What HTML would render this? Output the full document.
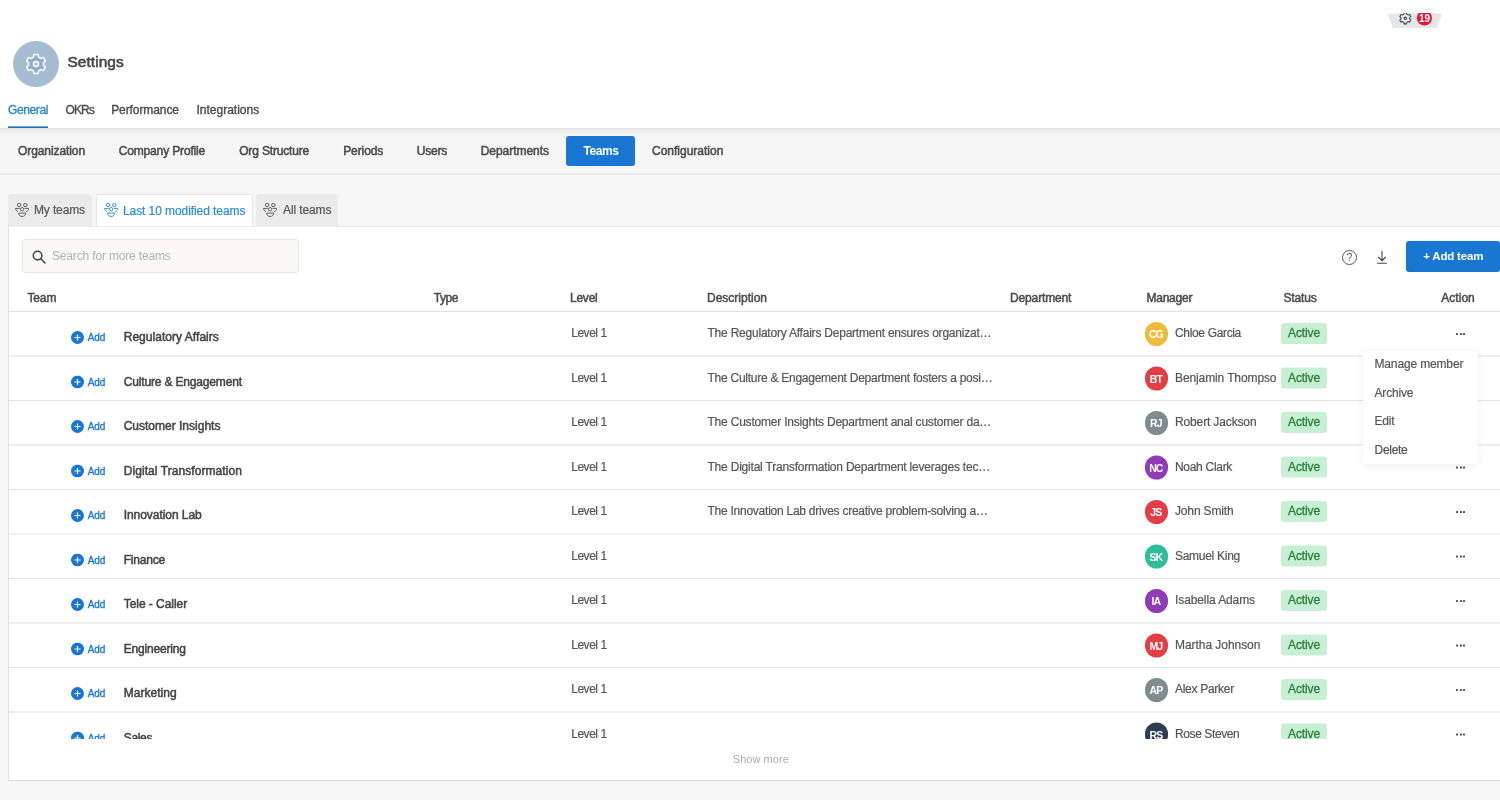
<!DOCTYPE html>
<html lang="en">
<head>
<meta charset="utf-8">
<title>Settings - Teams</title>
<style>
*{box-sizing:border-box;margin:0;padding:0}
html,body{width:1500px;height:800px;overflow:hidden}
body{position:relative;background:#f6f6f6;font-family:"Liberation Sans",Arial,sans-serif;font-size:12px;color:#4a4a4a;line-height:14px}
.wrap{position:absolute;left:0;top:0;width:1500px;height:800px;overflow:hidden;will-change:transform}
.abs,.t{position:absolute;white-space:nowrap}
.t{line-height:14px}
.m{-webkit-text-stroke:.5px currentColor}
.topbar{position:absolute;left:0;top:0;width:1500px;height:128px;background:#fff}
.widget{position:absolute;left:1386px;top:13px;width:58px;height:16px;overflow:hidden}
.logo{position:absolute;left:13px;top:40.5px;width:46px;height:46px;border-radius:50%;background:#a4bdd3}
.logo svg{position:absolute;left:12px;top:12px}
.title{left:67.5px;top:52px;font-size:15.5px;line-height:20px;color:#444;-webkit-text-stroke:.55px currentColor}
.tab{top:102.5px;font-size:12px;color:#4a4a4a;-webkit-text-stroke:.35px currentColor}
.tab.on{color:#2b87d3}
.ul{position:absolute;left:8px;top:126px;width:40px;height:2px;background:linear-gradient(#62aeec 0,#62aeec 1px,#2a6eae 1px)}
.subnav{position:absolute;left:0;top:128px;width:1500px;height:47px;background:linear-gradient(#e1e1e1 0,#ececec 2px,#f2f2f2 5px,#f5f5f5 8px);border-bottom:2px solid #ebebeb}
.sn{top:143.5px;color:#4a4a4a}
.snbtn{position:absolute;left:566px;top:136px;width:69px;height:30px;border-radius:3px;background:#1976d2}
.snbtn span{position:absolute;left:17.4px;top:7.5px;color:#fff;font-weight:bold;white-space:nowrap}
.tt{position:absolute;top:194px;height:32px;background:#ebebeb;color:#555;border-radius:3px 3px 0 0}
.tt.on{background:#fff;border:1px solid #e6e6e6;border-bottom:0;height:33px;color:#2b8ad6}
.tt.on svg{left:6.8px;top:8.4px}
.tt svg{position:absolute;left:6.8px;top:8.6px}
.tt span{position:absolute;top:8.5px;white-space:nowrap}
.panel{position:absolute;left:8px;top:226px;width:1492px;height:555px;background:#fff;border-left:1px solid #e2e2e2;border-top:1px solid #ececec;border-bottom:1px solid #dcdcdc}
.search{position:absolute;left:22px;top:239px;width:277px;height:34px;background:#faf9f8;border:1px solid #e8e8e8;border-radius:3px}
.search svg{position:absolute;left:9px;top:10px}
.search span{position:absolute;left:29px;top:9px;color:#b0b0b0;white-space:nowrap}
.addbtn{position:absolute;left:1406px;top:241px;width:93.6px;height:31px;border-radius:3px;background:#1976d2}
.addbtn span{position:absolute;left:17.2px;top:8px;color:#fff;font-weight:bold;white-space:nowrap;font-size:11.5px}
.th{top:291px;color:#4c4c4c}
.hline{position:absolute;left:9px;top:311px;width:1491px;height:1px;background:#e0e0e0}
.rows{position:absolute;left:9px;top:312px;width:1491px;height:427px;overflow:hidden}
.row{position:absolute;left:0;width:1491px;height:44.5px}
.ln{position:absolute;left:0;width:1491px;height:1px;background:#e2e2e2}
.ln.h{height:2px;background:#f0f0f0}
.row span{position:absolute;white-space:nowrap;line-height:14px}
.plus{left:62px;top:18.5px;width:13px;height:13px}
.plus svg{display:block}
.add{left:78.8px;top:18.5px;font-size:10px;color:#1976d2;-webkit-text-stroke:.3px currentColor}
.tname{left:114.7px;top:17.5px;color:#444;-webkit-text-stroke:.5px currentColor}
.lvl{left:562.2px;top:14px;color:#555}
.desc{left:698.5px;top:14px;color:#555}
.av{left:1135.5px;top:10px;width:23.6px;height:23.6px;border-radius:50%;color:#fff;font-size:10.5px;font-weight:bold;text-align:center;line-height:24px!important;letter-spacing:-.9px;text-indent:-.9px}
.mgr{left:1166px;top:14px;color:#555;width:102px;overflow:hidden}
.badge{left:1272px;top:11px;width:46px;height:20.5px;border-radius:3px;background:#c6efd3;color:#2a7d3c;text-align:center;line-height:20px!important;-webkit-text-stroke:.3px currentColor}
.dots{left:1447px;top:20.5px;width:9px;height:3px}
.dots i{position:absolute;top:0;width:2px;height:2px;background:#505050;border-radius:.5px}
.dots i:nth-child(1){left:0}.dots i:nth-child(2){left:3.5px}.dots i:nth-child(3){left:7px}
.showmore{left:732.8px;top:751.6px;color:#ababab;font-size:11px}
.menu{position:absolute;left:1362.5px;top:351px;width:115px;height:113px;background:#fff;border-radius:3px;box-shadow:0 1px 9px rgba(0,0,0,.075)}
.menu span{position:absolute;left:12px;color:#555;white-space:nowrap;line-height:14px}
.n19{position:absolute;left:31.4px;top:0px;width:14px;text-align:center;font-size:10px;line-height:12px;color:#fff;font-weight:bold;letter-spacing:-.2px}
.lvl,.desc,.mgr,.menu span,.tt span{-webkit-text-stroke:.2px currentColor}
</style>
</head>
<body>
<div class="wrap">
<div class="topbar"></div>
<div class="widget"><svg width="58" height="16" viewBox="0 0 58 16">
<polygon points="1.7,0.6 56,0.6 51,15 7,15" fill="#e4e6e8"/>
<g transform="translate(19.3,5.3) scale(.9)" fill="none" stroke="#444" stroke-width="1.15"><path d="M-1.2-6.2h2.4l.5 1.7 1.5.8 1.7-.5 1.2 2.1-1.2 1.3v1.6l1.2 1.3-1.2 2.1-1.7-.5-1.5.8-.5 1.7h-2.4l-.5-1.7-1.5-.8-1.7.5-1.2-2.1 1.2-1.3v-1.6l-1.2-1.3 1.2-2.1 1.7.5 1.5-.8z"/><circle cx="0" cy="0" r="1.3"/></g>
<circle cx="38.4" cy="5" r="7.6" fill="#e8143c"/>
</svg><b class="n19">19</b></div>
<div class="logo"><svg width="22" height="22" viewBox="-11 -11 22 22" fill="#93adc7" stroke="#fff" stroke-width="1.5" stroke-linejoin="round"><path d="M-1.9-9.6h3.8l.7 2.7 2.2 1.3 2.7-.8 1.9 3.3-2 1.9v2.4l2 1.9-1.9 3.3-2.7-.8-2.2 1.3-.7 2.7h-3.8l-.7-2.7-2.2-1.3-2.7.8-1.9-3.3 2-1.9v-2.4l-2-1.9 1.9-3.3 2.7.8 2.2-1.3z"/><circle cx="0" cy="0" r="2.5" fill="#a4bdd3"/></svg></div>
<div class="t title m" style="letter-spacing:0.03px">Settings</div>
<div class="t tab on" style="left:8px;letter-spacing:-0.39px">General</div>
<div class="t tab" style="left:65.5px;letter-spacing:-0.94px">OKRs</div>
<div class="t tab" style="left:111.2px;letter-spacing:-0.09px">Performance</div>
<div class="t tab" style="left:196.5px">Integrations</div>
<div class="ul"></div>
<div class="subnav"></div>
<div class="t sn m" style="left:18px;letter-spacing:-0.09px">Organization</div>
<div class="t sn m" style="left:118.7px;letter-spacing:-0.15px">Company Profile</div>
<div class="t sn m" style="left:239.2px;letter-spacing:-0.16px">Org Structure</div>
<div class="t sn m" style="left:343.2px;letter-spacing:-0.10px">Periods</div>
<div class="t sn m" style="left:416.8px;letter-spacing:-0.23px">Users</div>
<div class="t sn m" style="left:480.7px;letter-spacing:-0.04px">Departments</div>
<div class="snbtn"><span class="" style="letter-spacing:-0.43px">Teams</span></div>
<div class="t sn m" style="left:652px">Configuration</div>
<div class="tt" style="left:8px;width:84px"><svg width="14.4" height="14.4" viewBox="0 0 14.4 14.4" fill="none" stroke="#555" stroke-width=".95"><circle cx="4.1" cy="2" r="1.7"/><circle cx="10.3" cy="2" r="1.7"/><circle cx="7.2" cy="6.2" r="1.7"/><path d="M4.6 5.4H.6c0 1.5.9 2.7 2.4 3.1M9.8 5.4h4c0 1.5-.9 2.700000000000001-2.4 3.1M3.6 10.1h7.2c0 1.9-1.6 3.4-3.6 3.4s-3.6-1.5-3.6-3.4z"/></svg><span class="" style="left:26px;letter-spacing:-0.14px">My teams</span></div>
<div class="tt on" style="left:96px;width:157px"><svg width="14.4" height="14.4" viewBox="0 0 14.4 14.4" fill="none" stroke="#2b8ad6" stroke-width=".95"><circle cx="4.1" cy="2" r="1.7"/><circle cx="10.3" cy="2" r="1.7"/><circle cx="7.2" cy="6.2" r="1.7"/><path d="M4.6 5.4H.6c0 1.5.9 2.7 2.4 3.1M9.8 5.4h4c0 1.5-.9 2.700000000000001-2.4 3.1M3.6 10.1h7.2c0 1.9-1.6 3.4-3.6 3.4s-3.6-1.5-3.6-3.4z"/></svg><span class="" style="left:26px;letter-spacing:-0.08px">Last 10 modified teams</span></div>
<div class="tt" style="left:256px;width:81.5px"><svg width="14.4" height="14.4" viewBox="0 0 14.4 14.4" fill="none" stroke="#555" stroke-width=".95"><circle cx="4.1" cy="2" r="1.7"/><circle cx="10.3" cy="2" r="1.7"/><circle cx="7.2" cy="6.2" r="1.7"/><path d="M4.6 5.4H.6c0 1.5.9 2.7 2.4 3.1M9.8 5.4h4c0 1.5-.9 2.700000000000001-2.4 3.1M3.6 10.1h7.2c0 1.9-1.6 3.4-3.6 3.4s-3.6-1.5-3.6-3.4z"/></svg><span class="" style="left:27px;letter-spacing:-0.12px">All teams</span></div>
<div class="panel"></div>
<div class="search"><svg width="14" height="14" viewBox="0 0 14 14" fill="none" stroke="#444" stroke-width="1.5"><circle cx="5.6" cy="5.6" r="4.3"/><path d="M8.8 8.8l4.2 4.2" stroke-linecap="round"/></svg><span class="" style="letter-spacing:-0.16px">Search for more teams</span></div>
<svg class="abs" style="left:1341px;top:249px" width="17" height="17" viewBox="0 0 17 17"><circle cx="8.5" cy="8.5" r="7" fill="none" stroke="#555" stroke-width="1"/><text x="8.5" y="12.2" text-anchor="middle" font-family="Liberation Sans, sans-serif" font-size="10.5" fill="#555">?</text></svg>
<svg class="abs" style="left:1375px;top:250px" width="14" height="15" viewBox="0 0 14 15" fill="none" stroke="#444" stroke-width="1.1"><path d="M7 1v9.5M3.2 7l3.800000000000001 3.700000000000001 3.8-3.700000000000001M2.2 13.3h9.6"/></svg>
<div class="addbtn"><span class="" style="letter-spacing:-0.19px">+ Add team</span></div>
<div class="t th m" style="left:27.5px;letter-spacing:-0.15px">Team</div>
<div class="t th m" style="left:433.7px;letter-spacing:-0.44px">Type</div>
<div class="t th m" style="left:570px;letter-spacing:-0.24px">Level</div>
<div class="t th m" style="left:707px">Description</div>
<div class="t th m" style="left:1010px;letter-spacing:-0.14px">Department</div>
<div class="t th m" style="left:1146.5px;letter-spacing:-0.24px">Manager</div>
<div class="t th m" style="left:1283.4px;letter-spacing:-0.12px">Status</div>
<div class="t th m" style="left:1441.3px;letter-spacing:0.02px">Action</div>
<div class="hline"></div>
<div class="rows">
<div class="row" style="top:0px">
  <span class="plus"><svg viewBox="0 0 12 12" width="13" height="13"><circle cx="6" cy="6" r="6" fill="#1976d2"/><path d="M6 3.2v5.6M3.2 6h5.6" stroke="#fff" stroke-width="1.1" fill="none"/></svg></span><span class="add" style="letter-spacing:-0.13px">Add</span>
  <span class="tname" style="letter-spacing:0.04px">Regulatory Affairs</span>
  <span class="lvl" style="letter-spacing:-0.47px">Level 1</span>
  <span class="desc" style="letter-spacing:-0.22px">The Regulatory Affairs Department ensures organizat…</span>
  <span class="av" style="background:#edba3c">CG</span>
  <span class="mgr" style="letter-spacing:-0.34px">Chloe Garcia</span>
  <span class="badge" style="letter-spacing:-0.12px">Active</span>
  <span class="dots"><i></i><i></i><i></i></span>
</div>
<div class="ln h" style="top:43px"></div>
<div class="row" style="top:44px;transform:translateY(.5px)">
  <span class="plus"><svg viewBox="0 0 12 12" width="13" height="13"><circle cx="6" cy="6" r="6" fill="#1976d2"/><path d="M6 3.2v5.6M3.2 6h5.6" stroke="#fff" stroke-width="1.1" fill="none"/></svg></span><span class="add" style="letter-spacing:-0.13px">Add</span>
  <span class="tname" style="letter-spacing:-0.16px">Culture &amp; Engagement</span>
  <span class="lvl" style="letter-spacing:-0.47px">Level 1</span>
  <span class="desc" style="letter-spacing:-0.26px">The Culture &amp; Engagement Department fosters a posi…</span>
  <span class="av" style="background:#e53d46">BT</span>
  <span class="mgr" style="letter-spacing:-0.11px">Benjamin Thompson</span>
  <span class="badge" style="letter-spacing:-0.12px">Active</span>
  <span class="dots"><i></i><i></i><i></i></span>
</div>
<div class="ln" style="top:88px"></div>
<div class="row" style="top:89px">
  <span class="plus"><svg viewBox="0 0 12 12" width="13" height="13"><circle cx="6" cy="6" r="6" fill="#1976d2"/><path d="M6 3.2v5.6M3.2 6h5.6" stroke="#fff" stroke-width="1.1" fill="none"/></svg></span><span class="add" style="letter-spacing:-0.13px">Add</span>
  <span class="tname">Customer Insights</span>
  <span class="lvl" style="letter-spacing:-0.47px">Level 1</span>
  <span class="desc" style="letter-spacing:-0.21px">The Customer Insights Department anal customer da…</span>
  <span class="av" style="background:#7f8c8d">RJ</span>
  <span class="mgr" style="letter-spacing:-0.14px">Robert Jackson</span>
  <span class="badge" style="letter-spacing:-0.12px">Active</span>
  <span class="dots"><i></i><i></i><i></i></span>
</div>
<div class="ln h" style="top:132px"></div>
<div class="row" style="top:133px;transform:translateY(.5px)">
  <span class="plus"><svg viewBox="0 0 12 12" width="13" height="13"><circle cx="6" cy="6" r="6" fill="#1976d2"/><path d="M6 3.2v5.6M3.2 6h5.6" stroke="#fff" stroke-width="1.1" fill="none"/></svg></span><span class="add" style="letter-spacing:-0.13px">Add</span>
  <span class="tname" style="letter-spacing:0.07px">Digital Transformation</span>
  <span class="lvl" style="letter-spacing:-0.47px">Level 1</span>
  <span class="desc" style="letter-spacing:-0.21px">The Digital Transformation Department leverages tec…</span>
  <span class="av" style="background:#8e3bb5">NC</span>
  <span class="mgr" style="letter-spacing:-0.30px">Noah Clark</span>
  <span class="badge" style="letter-spacing:-0.12px">Active</span>
  <span class="dots"><i></i><i></i><i></i></span>
</div>
<div class="ln" style="top:177px"></div>
<div class="row" style="top:178px">
  <span class="plus"><svg viewBox="0 0 12 12" width="13" height="13"><circle cx="6" cy="6" r="6" fill="#1976d2"/><path d="M6 3.2v5.6M3.2 6h5.6" stroke="#fff" stroke-width="1.1" fill="none"/></svg></span><span class="add" style="letter-spacing:-0.13px">Add</span>
  <span class="tname" style="letter-spacing:-0.05px">Innovation Lab</span>
  <span class="lvl" style="letter-spacing:-0.47px">Level 1</span>
  <span class="desc" style="letter-spacing:-0.25px">The Innovation Lab drives creative problem-solving a…</span>
  <span class="av" style="background:#e53d46">JS</span>
  <span class="mgr" style="letter-spacing:-0.15px">John Smith</span>
  <span class="badge" style="letter-spacing:-0.12px">Active</span>
  <span class="dots"><i></i><i></i><i></i></span>
</div>
<div class="ln h" style="top:221px"></div>
<div class="row" style="top:222px;transform:translateY(.5px)">
  <span class="plus"><svg viewBox="0 0 12 12" width="13" height="13"><circle cx="6" cy="6" r="6" fill="#1976d2"/><path d="M6 3.2v5.6M3.2 6h5.6" stroke="#fff" stroke-width="1.1" fill="none"/></svg></span><span class="add" style="letter-spacing:-0.13px">Add</span>
  <span class="tname" style="letter-spacing:-0.19px">Finance</span>
  <span class="lvl" style="letter-spacing:-0.47px">Level 1</span>
  <span class="desc f"></span>
  <span class="av" style="background:#2ebd99">SK</span>
  <span class="mgr" style="letter-spacing:-0.28px">Samuel King</span>
  <span class="badge" style="letter-spacing:-0.12px">Active</span>
  <span class="dots"><i></i><i></i><i></i></span>
</div>
<div class="ln" style="top:266px"></div>
<div class="row" style="top:267px">
  <span class="plus"><svg viewBox="0 0 12 12" width="13" height="13"><circle cx="6" cy="6" r="6" fill="#1976d2"/><path d="M6 3.2v5.6M3.2 6h5.6" stroke="#fff" stroke-width="1.1" fill="none"/></svg></span><span class="add" style="letter-spacing:-0.13px">Add</span>
  <span class="tname" style="letter-spacing:-0.04px">Tele - Caller</span>
  <span class="lvl" style="letter-spacing:-0.47px">Level 1</span>
  <span class="desc f"></span>
  <span class="av" style="background:#8e3bb5">IA</span>
  <span class="mgr" style="letter-spacing:-0.10px">Isabella Adams</span>
  <span class="badge" style="letter-spacing:-0.12px">Active</span>
  <span class="dots"><i></i><i></i><i></i></span>
</div>
<div class="ln h" style="top:310px"></div>
<div class="row" style="top:311px;transform:translateY(.5px)">
  <span class="plus"><svg viewBox="0 0 12 12" width="13" height="13"><circle cx="6" cy="6" r="6" fill="#1976d2"/><path d="M6 3.2v5.6M3.2 6h5.6" stroke="#fff" stroke-width="1.1" fill="none"/></svg></span><span class="add" style="letter-spacing:-0.13px">Add</span>
  <span class="tname" style="letter-spacing:-0.19px">Engineering</span>
  <span class="lvl" style="letter-spacing:-0.47px">Level 1</span>
  <span class="desc f"></span>
  <span class="av" style="background:#e53d46">MJ</span>
  <span class="mgr" style="letter-spacing:-0.05px">Martha Johnson</span>
  <span class="badge" style="letter-spacing:-0.12px">Active</span>
  <span class="dots"><i></i><i></i><i></i></span>
</div>
<div class="ln" style="top:355px"></div>
<div class="row" style="top:356px">
  <span class="plus"><svg viewBox="0 0 12 12" width="13" height="13"><circle cx="6" cy="6" r="6" fill="#1976d2"/><path d="M6 3.2v5.6M3.2 6h5.6" stroke="#fff" stroke-width="1.1" fill="none"/></svg></span><span class="add" style="letter-spacing:-0.13px">Add</span>
  <span class="tname" style="letter-spacing:0.04px">Marketing</span>
  <span class="lvl" style="letter-spacing:-0.47px">Level 1</span>
  <span class="desc f"></span>
  <span class="av" style="background:#7f8c8d">AP</span>
  <span class="mgr" style="letter-spacing:-0.29px">Alex Parker</span>
  <span class="badge" style="letter-spacing:-0.12px">Active</span>
  <span class="dots"><i></i><i></i><i></i></span>
</div>
<div class="ln h" style="top:399px"></div>
<div class="row" style="top:400px;transform:translateY(.5px)">
  <span class="plus"><svg viewBox="0 0 12 12" width="13" height="13"><circle cx="6" cy="6" r="6" fill="#1976d2"/><path d="M6 3.2v5.6M3.2 6h5.6" stroke="#fff" stroke-width="1.1" fill="none"/></svg></span><span class="add" style="letter-spacing:-0.13px">Add</span>
  <span class="tname" style="letter-spacing:-0.31px">Sales</span>
  <span class="lvl" style="letter-spacing:-0.47px">Level 1</span>
  <span class="desc f"></span>
  <span class="av" style="background:#2c3e50">RS</span>
  <span class="mgr" style="letter-spacing:-0.40px">Rose Steven</span>
  <span class="badge" style="letter-spacing:-0.12px">Active</span>
  <span class="dots"><i></i><i></i><i></i></span>
</div>
<div class="ln" style="top:444px"></div>
</div>
<div class="t showmore" style="letter-spacing:0.04px">Show more</div>
<div class="menu"><span class="" style="top:6px;letter-spacing:-0.15px">Manage member</span><span class="" style="top:34.5px;letter-spacing:-0.18px">Archive</span><span class="" style="top:63px;letter-spacing:-0.23px">Edit</span><span class="" style="top:91.5px;letter-spacing:-0.28px">Delete</span></div>
</div>
</body>
</html>
